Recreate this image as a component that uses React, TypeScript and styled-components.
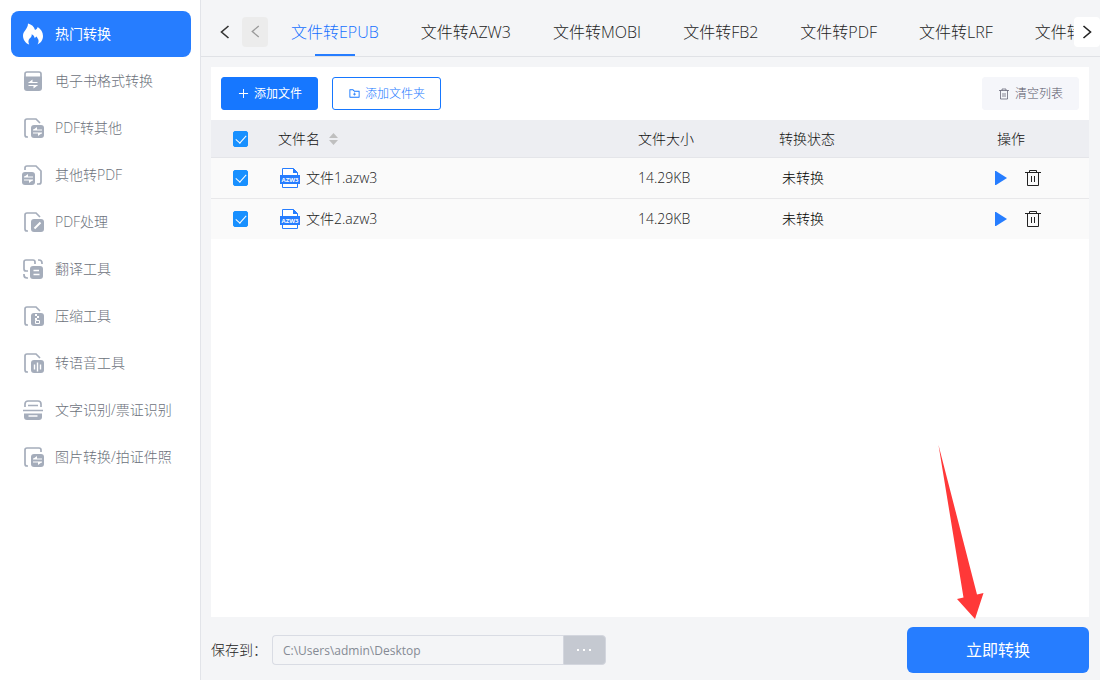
import React, { useState } from "react";
import styled, { createGlobalStyle, css } from "styled-components";
import { AiOutlinePlus, AiOutlineFolderAdd } from "react-icons/ai";

const blue = "#267dff";
const grey = "#a5adbb";
const strongFont = '"Open Sans", "Noto Sans CJK SC", sans-serif';

const GlobalStyle = createGlobalStyle`
  * { box-sizing: border-box; }
  body {
    margin: 0;
    background: #f4f5f7;
    color: #333;
    font-family: "Open Sans", "Noto Sans CJK SC Light", "Noto Sans CJK SC", sans-serif;
    font-size: 14px;
    font-weight: 300;
    line-height: 18px;
  }
  button, input { font: inherit; }
  button { cursor: pointer; }
`;

/* ---------- page ---------- */

const Page = styled.div`
  display: flex;
  min-height: 100vh;
`;

const Sidebar = styled.nav`
  display: flex;
  flex: none;
  flex-direction: column;
  gap: 1px;
  width: 201px;
  padding: 11px 9px 11px 11px;
  background: #fff;
  border-right: 1px solid #e2e4e9;
`;

const SideLink = styled.a<{ $active?: boolean }>`
  display: flex;
  align-items: center;
  gap: 11px;
  height: 46px;
  padding-left: 11px;
  border-radius: 8px;
  color: #6c717b;
  text-decoration: none;
  white-space: nowrap;
  ${(p) =>
    p.$active &&
    css`
      background: ${blue};
      color: #fff;
      font-family: ${strongFont};
      font-weight: 400;
    `}
`;

const Main = styled.main`
  display: flex;
  flex: 1;
  flex-direction: column;
  min-width: 0;
`;

/* ---------- tabs ---------- */

const Header = styled.header`
  display: flex;
  align-items: center;
  height: 57px;
  padding: 7px 0 0 14px;
  border-bottom: 1px solid #e0e2e6;
`;

const IconButton = styled.button<{ $bg?: string; $color: string }>`
  display: flex;
  flex: none;
  align-items: center;
  justify-content: center;
  padding: 0;
  width: ${(p) => (p.$bg ? "26px" : "20px")};
  height: 30px;
  border: 0;
  border-radius: 4px;
  background: ${(p) => p.$bg || "transparent"};
  color: ${(p) => p.$color};
`;

const TabList = styled.div`
  display: flex;
  flex: 1;
  gap: 42px;
  min-width: 0;
  margin-left: 23px;
  overflow: hidden;
`;

const Tab = styled.button<{ $active: boolean }>`
  display: flex;
  flex: none;
  flex-direction: column;
  align-items: center;
  justify-content: space-between;
  height: 49px;
  padding: 7px 0 0;
  border: 0;
  background: transparent;
  color: ${(p) => (p.$active ? "#1470ff" : "#222")};
  font-size: 16px;
  line-height: 36px;
  white-space: nowrap;
  &::after {
    content: "";
    width: 40px;
    height: 2px;
    background: ${(p) => (p.$active ? blue : "transparent")};
  }
`;

const PrevSlot = styled.div`
  margin-left: 7px;
`;

/* ---------- panel ---------- */

const Panel = styled.section`
  flex: 1;
  margin: 10px 11px 0 10px;
  background: #fff;
`;

const Toolbar = styled.div`
  display: flex;
  align-items: center;
  gap: 14px;
  padding: 10px;
`;

const ToolButton = styled.button<{ $kind: "primary" | "outline" | "muted" }>`
  display: flex;
  align-items: center;
  justify-content: center;
  gap: 4px;
  height: 33px;
  padding: 0 15px;
  border: 1px solid #1677ff;
  border-radius: 3px;
  background: #fff;
  color: #1677ff;
  font-size: 12px;
  white-space: nowrap;
  ${(p) =>
    p.$kind === "primary" &&
    css`
      background: #1677ff;
      color: #fff;
      font-family: ${strongFont};
      font-weight: 400;
    `}
  ${(p) =>
    p.$kind === "muted" &&
    css`
      margin-left: auto;
      border-color: #f5f6fa;
      background: #f5f6fa;
      color: #556;
    `}
`;

const FileTable = styled.table`
  width: 100%;
  border-collapse: collapse;
  table-layout: fixed;
`;

const Th = styled.th<{ $width?: number }>`
  width: ${(p) => (p.$width ? p.$width + "px" : "auto")};
  height: 37px;
  padding: 2px 10px 0;
  border-bottom: 1px solid #e4e5e9;
  background: #edeef2;
  color: #111;
  font-weight: 300;
  text-align: left;
  &:last-child { padding-left: 12px; }
`;

const Td = styled.td`
  height: 41px;
  padding: 0 10px;
  border-bottom: 1px solid #e8e8ea;
  background: #fafafa;
  color: #222;
  tr:last-child > & { border-bottom: 0; }
`;

const CellLine = styled.div<{ $gap: number; $indent?: number }>`
  display: flex;
  align-items: center;
  gap: ${(p) => p.$gap}px;
  padding-left: ${(p) => p.$indent || 0}px;
`;

const Status = styled.span`
  padding-left: 3px;
  color: #000;
`;

const Checkbox = styled.input.attrs({ type: "checkbox" })`
  appearance: none;
  display: flex;
  justify-content: center;
  width: 15px;
  height: 16px;
  margin: 0 0 0 12px;
  border: 1px solid #1890ff;
  border-radius: 2px;
  background: #fff;
  &:checked { background: #1890ff; }
  &:checked::after {
    content: "";
    width: 5px;
    height: 9px;
    margin-top: 1px;
    border: solid #fff;
    border-width: 0 1px 1px 0;
    transform: rotate(42deg);
  }
`;

const BareButton = styled.button`
  display: flex;
  padding: 0;
  border: 0;
  background: transparent;
  color: inherit;
`;

/* ---------- footer ---------- */

const Footer = styled.footer`
  display: flex;
  align-items: center;
  padding: 10px 11px 7px 10px;
`;

const PathLabel = styled.label`
  width: 61px;
  color: #222;
  white-space: nowrap;
`;

const PathInput = styled.input`
  width: 291px;
  height: 30px;
  padding: 0 10px;
  border: 1px solid #d9dce4;
  border-right: 0;
  border-radius: 4px 0 0 4px;
  background: #f4f5f7;
  color: #858a94;
  font-size: 12px;
  font-weight: 400;
`;

const BrowseButton = styled.button`
  display: flex;
  align-items: center;
  justify-content: center;
  width: 43px;
  height: 30px;
  padding: 0;
  border: 1px solid #d3d6de;
  border-radius: 0 4px 4px 0;
  background: #c5c9d1;
`;

const ConvertArea = styled.div`
  position: relative;
  margin-left: auto;
`;

const ConvertButton = styled.button`
  width: 182px;
  height: 46px;
  padding: 0;
  border: 0;
  border-radius: 6px;
  background: ${blue};
  color: #fff;
  font-family: ${strongFont};
  font-size: 16px;
  font-weight: 400;
`;

const Pointer = styled.svg`
  position: absolute;
  left: 31px;
  bottom: 54px;
  pointer-events: none;
`;

/* ---------- icons ---------- */

type IconName =
  | "fire" | "ebook" | "fromPdf" | "toPdf" | "edit"
  | "translate" | "zip" | "audio" | "ocr" | "image";

const docOutline = "M6 20H5a2 2 0 0 1-2-2V4a2 2 0 0 1 2-2h9l4 4";

const Swap = ({ x, y }: { x: number; y: number }) => (
  <g>
    <path
      d={`M${x + 9} ${y + 4.5}h-9M${x} ${y + 7.5}h9`}
      stroke="#fff"
      strokeWidth="1.100"
    />
    <path
      d={`M${x} ${y + 4.5}l4-3v3zM${x + 9} ${y + 7.5}l-4 3v-3z`}
      fill="#fff"
      stroke="none"
    />
  </g>
);

const Badge = ({ x }: { x: number }) => (
  <rect x={x} y="8" width="13" height="13" rx="3" fill={grey} stroke="none" />
);

const SideIcon = ({ name }: { name: IconName }) => (
  <svg width="22" height="22" viewBox="0 0 22 22" fill="none" stroke={grey} strokeWidth="1.700" aria-hidden="true">
    {name === "fire" && (
      <path
        stroke="none"
        fill="#fff"
        d="M6 0.500C9.500 1.500 12.300 3.500 13 7c1.300-.3 2.300-1.300 2.700-2.900C18.800 6 21 9.300 21 13c0 4-2.200 7-5.500 8.500 1-1.700 1.400-3.300.8-4.900-.5-1.200-1.300-1.900-1.500-3.100-1 .3-1.700.9-2 1.800-.5-1.900-1.300-3.300-3.100-4 .2 2.200-.8 3-2.100 4.300-1.400 1.500-1.500 3.700-.4 5.900C3.500 20.100 1 16.700 1 12.700 1 8 6 6 6 .5z"
      />
    )}
    {name === "ebook" && (
      <>
        <path d="M3 9V4a2 2 0 0 1 2-2h12a2 2 0 0 1 2 2v5" />
        <path d="M2 6.500h18V18a3 3 0 0 1-3 3H5a3 3 0 0 1-3-3z" fill={grey} stroke="none" />
        <Swap x={6.5} y={8} />
      </>
    )}
    {name === "fromPdf" && (
      <>
        <path d={docOutline} />
        <Badge x={9} />
        <Swap x={11} y={8.5} />
      </>
    )}
    {name === "toPdf" && (
      <>
        <path d="M3 6V4a2 2 0 0 1 2-2h9l5 5v11a2 2 0 0 1-2 2h-2" />
        <Badge x={0} />
        <Swap x={2} y={8.5} />
      </>
    )}
    {name === "edit" && (
      <>
        <path d={docOutline} />
        <Badge x={9} />
        <path d="M12.500 17.500l6-6" stroke="#fff" strokeWidth="2" />
      </>
    )}
    {name === "translate" && (
      <>
        <path d="M6 13H4a2 2 0 0 1-2-2V4a2 2 0 0 1 2-2h7a2 2 0 0 1 2 2v2M16 2h1a3 3 0 0 1 3 3v1M2 16v1a3 3 0 0 0 3 3h1" />
        <rect x="8" y="8" width="13" height="13" rx="3" fill={grey} stroke="none" />
        <path d="M11.500 12.500h5.500M11.500 16.500h6" stroke="#fff" strokeWidth="1.500" />
      </>
    )}
    {name === "zip" && (
      <>
        <path d={docOutline} />
        <Badge x={9} />
        <path d="M14 9v2M16 11v2M14 13v2" stroke="#fff" strokeWidth="2" />
        <path d="M13.500 15.500h4v3h-4z" stroke="#fff" strokeWidth="1" />
      </>
    )}
    {name === "audio" && (
      <>
        <path d={docOutline} />
        <Badge x={9} />
        <path d="M12.500 12.500v5M15.500 10.500v9M18.500 12.500v5" stroke="#fff" strokeWidth="1.400" />
      </>
    )}
    {name === "ocr" && (
      <>
        <path d="M3 8V5a3 3 0 0 1 3-3h10a3 3 0 0 1 3 3v3M6 6.500h10M1 11.500h20" />
        <path d="M2 14.500h18V18a3 3 0 0 1-3 3H5a3 3 0 0 1-3-3z" fill={grey} stroke="none" />
        <path d="M6.500 17h9" stroke="#fff" strokeWidth="1.500" />
      </>
    )}
    {name === "image" && (
      <>
        <path d="M6 20H5a2 2 0 0 1-2-2V4a2 2 0 0 1 2-2h12a2 2 0 0 1 2 2v2" />
        <Badge x={9} />
        <Swap x={11} y={8.5} />
      </>
    )}
  </svg>
);

const Chevron = ({ dir, size, weight }: { dir: "left" | "right"; size: number; weight: number }) => (
  <svg width={size} height={size} viewBox="0 0 14 14" fill="none" stroke="currentColor" strokeWidth={weight} aria-hidden="true">
    <path d={dir === "left" ? "M10.500 1L3.500 7l7 6" : "M3.500 1l7 6-7 6"} />
  </svg>
);

const TrashIcon = ({ size }: { size: number }) => (
  <svg width={size} height={size} viewBox="0 0 16 16" fill="none" stroke="currentColor" aria-hidden="true">
    <path d="M0 2.500h16M4.500 2.500v-2h7v2M2.500 2.500v13h11v-13M6.500 6v6M9.500 6v6" />
  </svg>
);

const SmallTrashIcon = () => (
  <svg width="13" height="12" viewBox="0 0 13 12" fill="none" stroke="currentColor" aria-hidden="true">
    <path d="M1 2.500h10M4 2.500v-1.500h4v1.500M2.500 2.500v8.500h7v-8.500M5 5v4M7 5v4" strokeOpacity=".7" />
  </svg>
);

const FileIcon = () => (
  <svg width="20" height="20" viewBox="0 0 20 20" aria-hidden="true">
    <path d="M2.500 .5h11l4 4v15h-15z" fill="#fff" stroke={blue} />
    <path d="M13 0l5 5h-5z" fill={blue} />
    <path d="M0 7h20v9H0z" fill={blue} />
    <text x="10" y="14" fill="#fff" fontSize="6" fontWeight="700" textAnchor="middle">AZW3</text>
  </svg>
);

/* ---------- data ---------- */

const sideItems: { icon: IconName; label: string }[] = [
  { icon: "fire", label: "热门转换" },
  { icon: "ebook", label: "电子书格式转换" },
  { icon: "fromPdf", label: "PDF转其他" },
  { icon: "toPdf", label: "其他转PDF" },
  { icon: "edit", label: "PDF处理" },
  { icon: "translate", label: "翻译工具" },
  { icon: "zip", label: "压缩工具" },
  { icon: "audio", label: "转语音工具" },
  { icon: "ocr", label: "文字识别/票证识别" },
  { icon: "image", label: "图片转换/拍证件照" },
];

const tabs = ["EPUB", "AZW3", "MOBI", "FB2", "PDF", "LRF", "TXT"];
const files = ["文件1.azw3", "文件2.azw3"];

export default function App() {
  const [tab, setTab] = useState("EPUB");
  const [path, setPath] = useState("C:\\Users\\admin\\Desktop");

  return (
    <>
      <GlobalStyle />
      <Page>
        <Sidebar>
          {sideItems.map((item, i) => (
            <SideLink key={item.icon} href="#" $active={i === 0}>
              <SideIcon name={item.icon} />
              {item.label}
            </SideLink>
          ))}
        </Sidebar>
        <Main>
          <Header>
            <IconButton $color="#333" aria-label="返回">
              <Chevron dir="left" size={14} weight={1.6} />
            </IconButton>
            <PrevSlot>
              <IconButton $bg="#ececec" $color="#999" aria-label="上一页">
                <Chevron dir="left" size={13} weight={1.4} />
              </IconButton>
            </PrevSlot>
            <TabList role="tablist">
              {tabs.map((t) => (
                <Tab key={t} role="tab" aria-selected={t === tab} $active={t === tab} onClick={() => setTab(t)}>
                  文件转{t}
                </Tab>
              ))}
            </TabList>
            <IconButton $bg="#fff" $color="#222" aria-label="下一页">
              <Chevron dir="right" size={14} weight={1.6} />
            </IconButton>
          </Header>

          <Panel>
            <Toolbar>
              <ToolButton $kind="primary">
                <AiOutlinePlus size={13} />
                添加文件
              </ToolButton>
              <ToolButton $kind="outline">
                <AiOutlineFolderAdd size={13} />
                添加文件夹
              </ToolButton>
              <ToolButton $kind="muted">
                <SmallTrashIcon />
                清空列表
              </ToolButton>
            </Toolbar>
            <FileTable>
              <thead>
                <tr>
                  <Th $width={57}>
                    <Checkbox defaultChecked aria-label="全选" />
                  </Th>
                  <Th>
                    <CellLine $gap={9}>
                      文件名
                      <svg width="9" height="12" viewBox="0 0 9 12" fill="#bfbfbf" aria-hidden="true">
                        <path d="M4.500 0L9 5H0zM4.500 12L9 7H0z" />
                      </svg>
                    </CellLine>
                  </Th>
                  <Th $width={141}>文件大小</Th>
                  <Th $width={216}>转换状态</Th>
                  <Th $width={104}>操作</Th>
                </tr>
              </thead>
              <tbody>
                {files.map((f) => (
                  <tr key={f}>
                    <Td>
                      <Checkbox defaultChecked aria-label={f} />
                    </Td>
                    <Td>
                      <CellLine $gap={6} $indent={2}>
                        <FileIcon />
                        {f}
                      </CellLine>
                    </Td>
                    <Td>14.29KB</Td>
                    <Td>
                      <Status>未转换</Status>
                    </Td>
                    <Td>
                      <CellLine $gap={18}>
                        <BareButton aria-label="开始">
                          <svg width="12" height="14" viewBox="0 0 12 14" fill={blue}>
                            <path d="M0 0h1l11 7-11 7H0z" />
                          </svg>
                        </BareButton>
                        <BareButton aria-label="删除">
                          <TrashIcon size={16} />
                        </BareButton>
                      </CellLine>
                    </Td>
                  </tr>
                ))}
              </tbody>
            </FileTable>
          </Panel>

          <Footer>
            <PathLabel htmlFor="save-path">保存到：</PathLabel>
            <PathInput id="save-path" value={path} onChange={(e) => setPath(e.target.value)} />
            <BrowseButton aria-label="浏览">
              <svg width="15" height="2" viewBox="0 0 15 2" fill="#fff">
                <path d="M0 0h2v2H0zM6 0h2v2H6zM12 0h2v2h-2z" />
              </svg>
            </BrowseButton>
            <ConvertArea>
              <ConvertButton>立即转换</ConvertButton>
              <Pointer width="46" height="174" viewBox="0 0 46 174" fill="#ff3838" aria-hidden="true">
                <path d="M.5 0L39 149.500l6.500-1.500L37 174 19 154l6.500-1.500z" />
              </Pointer>
            </ConvertArea>
          </Footer>
        </Main>
      </Page>
    </>
  );
}
